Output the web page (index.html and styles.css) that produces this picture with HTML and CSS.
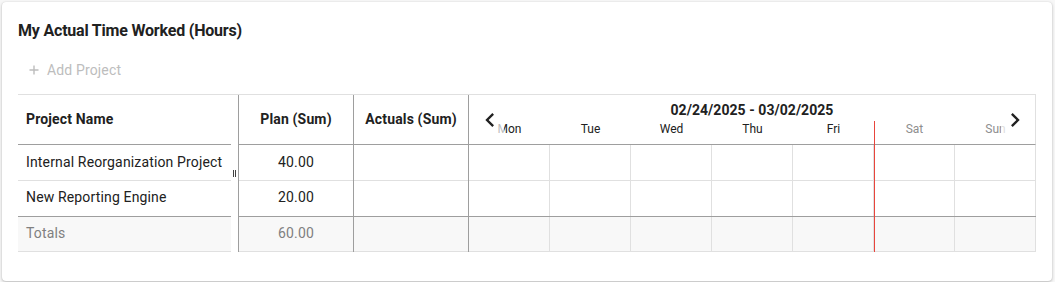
FILE: index.html
```html
<!DOCTYPE html>
<html>
<head>
<meta charset="utf-8">
<link rel="stylesheet" href="styles.css">
</head>
<body>
<div class="card">
  <h2 class="title">My Actual Time Worked (Hours)</h2>
  <div class="toolbar">
    <button class="add-btn">
      <svg class="plus" viewBox="0 0 10 10" width="10" height="10"><path d="M5 0.5v9M0.5 5h9" stroke="currentColor" stroke-width="1.4" fill="none"/></svg>
      <span>Add Project</span>
    </button>
  </div>
  <div class="grid">
    <div class="pane-left">
      <div class="cell head name">Project Name</div>
      <div class="cell row name">Internal Reorganization Project</div>
      <div class="cell row last name">New Reporting Engine</div>
      <div class="cell total name">Totals</div>
    </div>
    <div class="splitter"><span class="handle"></span></div>
    <div class="col num">
      <div class="cell head">Plan (Sum)</div>
      <div class="cell row">40.00</div>
      <div class="cell row last">20.00</div>
      <div class="cell total">60.00</div>
    </div>
    <div class="col num">
      <div class="cell head">Actuals (Sum)</div>
      <div class="cell row"></div>
      <div class="cell row last"></div>
      <div class="cell total"></div>
    </div>
    <div class="calendar">
      <div class="cal-head">
        <div class="range">02/24/2025 - 03/02/2025</div>
        <div class="days">
          <span>Mon</span><span>Tue</span><span>Wed</span><span>Thu</span><span>Fri</span><span class="wkend">Sat</span><span class="wkend">Sun</span>
        </div>
        <button class="nav prev"><svg viewBox="0 0 24 24" width="28" height="28"><path d="M15.41 7.41L14 6l-6 6 6 6 1.41-1.41L10.83 12z" fill="#212121"/></svg></button>
        <button class="nav next"><svg viewBox="0 0 24 24" width="28" height="28"><path d="M10 6L8.59 7.41 13.17 12l-4.58 4.59L10 18l6-6z" fill="#212121"/></svg></button>
      </div>
      <div class="cal-row"><span></span><span></span><span></span><span></span><span></span><span></span><span></span></div>
      <div class="cal-row last"><span></span><span></span><span></span><span></span><span></span><span></span><span></span></div>
      <div class="cal-row total"><span></span><span></span><span></span><span></span><span></span><span></span><span></span></div>
      <div class="now-line"></div>
    </div>
  </div>
</div>
</body>
</html>
```

FILE: styles.css
```css
html, body {
  margin: 0;
  padding: 0;
  background: #f7f7f7;
}
body {
  font-family: Roboto, "Liberation Sans", sans-serif;
  color: #212121;
  padding: 2px 3px 1px 2px;
}
.card {
  background: #fff;
  border-radius: 4px;
  box-shadow: 0 1px 3px rgba(0, 0, 0, 0.25), 0 0 1px rgba(0, 0, 0, 0.12);
  height: 279px;
  box-sizing: border-box;
  padding: 19px 16px 0 16px;
}
.title {
  margin: 0;
  font-size: 16px;
  font-weight: 700;
  line-height: 19px;
  letter-spacing: -0.2px;
  color: #212121;
}
.toolbar {
  height: 36px;
  margin-top: 12px;
  display: flex;
  align-items: center;
}
.add-btn {
  border: none;
  background: none;
  padding: 0 0 0 11px;
  display: flex;
  align-items: center;
  gap: 8px;
  font-family: inherit;
  font-size: 14px;
  letter-spacing: 0.15px;
  color: #bdbdbd;
}
.add-btn .plus {
  color: #bdbdbd;
}
.grid {
  margin-top: 6px;
  display: flex;
  border-top: 1px solid #e0e0e0;
  font-size: 14px;
  letter-spacing: 0.15px;
}
.pane-left {
  width: 213px;
}
.cell {
  box-sizing: border-box;
  display: flex;
  align-items: center;
  border-bottom: 1px solid #e0e0e0;
  padding-bottom: 2px;
  white-space: nowrap;
}
.cell.head {
  height: 50px;
  font-weight: 700;
  border-bottom-color: #9e9e9e;
}
.cell.row {
  height: 36px;
}
.cell.row.last {
  border-bottom-color: #9e9e9e;
  padding-bottom: 3px;
}
.cell.total {
  height: 35px;
  background: #f8f8f8;
  color: #808080;
}
.name {
  padding-left: 8px;
}
.splitter {
  width: 7px;
  display: flex;
  align-items: center;
  justify-content: center;
}
.handle {
  width: 3px;
  height: 7px;
  border-left: 1px solid #424242;
  border-right: 1px solid #424242;
  box-sizing: border-box;
  margin-left: -1px;
}
.col {
  width: 115px;
  box-sizing: border-box;
  border-right: 1px solid #9e9e9e;
}
.splitter + .col {
  border-left: 1px solid #9e9e9e;
  width: 116px;
}
.col .cell {
  justify-content: center;
}
.calendar {
  width: 567px;
  position: relative;
  letter-spacing: 0;
}
.cal-head {
  height: 50px;
  box-sizing: border-box;
  border-bottom: 1px solid #9e9e9e;
  border-right: 1px solid #e0e0e0;
  padding-top: 6px;
  position: relative;
}
.range {
  text-align: center;
  font-weight: 700;
  line-height: 19px;
  letter-spacing: 0.05px;
}
.days {
  display: grid;
  grid-template-columns: repeat(7, 81px);
  font-size: 12px;
  line-height: 16px;
  margin-top: 1px;
  text-align: center;
}
.days .wkend {
  color: #8e8e8e;
}
.nav {
  position: absolute;
  top: 11px;
  width: 28px;
  height: 28px;
  padding: 0;
  border: none;
  background: rgba(255, 255, 255, 0.7);
  display: flex;
  align-items: center;
  justify-content: center;
}
.nav.prev {
  left: 7px;
}
.nav.next {
  left: 532px;
}
.cal-row {
  display: grid;
  grid-template-columns: repeat(7, 81px);
  height: 36px;
  box-sizing: border-box;
  border-bottom: 1px solid #e0e0e0;
}
.cal-row.last {
  border-bottom-color: #9e9e9e;
}
.cal-row.total {
  height: 35px;
  background: #f8f8f8;
}
.cal-row span {
  border-right: 1px solid #e0e0e0;
}
.now-line {
  position: absolute;
  left: 405px;
  top: 26px;
  bottom: 0;
  width: 1px;
  background: #e8453c;
}
```
